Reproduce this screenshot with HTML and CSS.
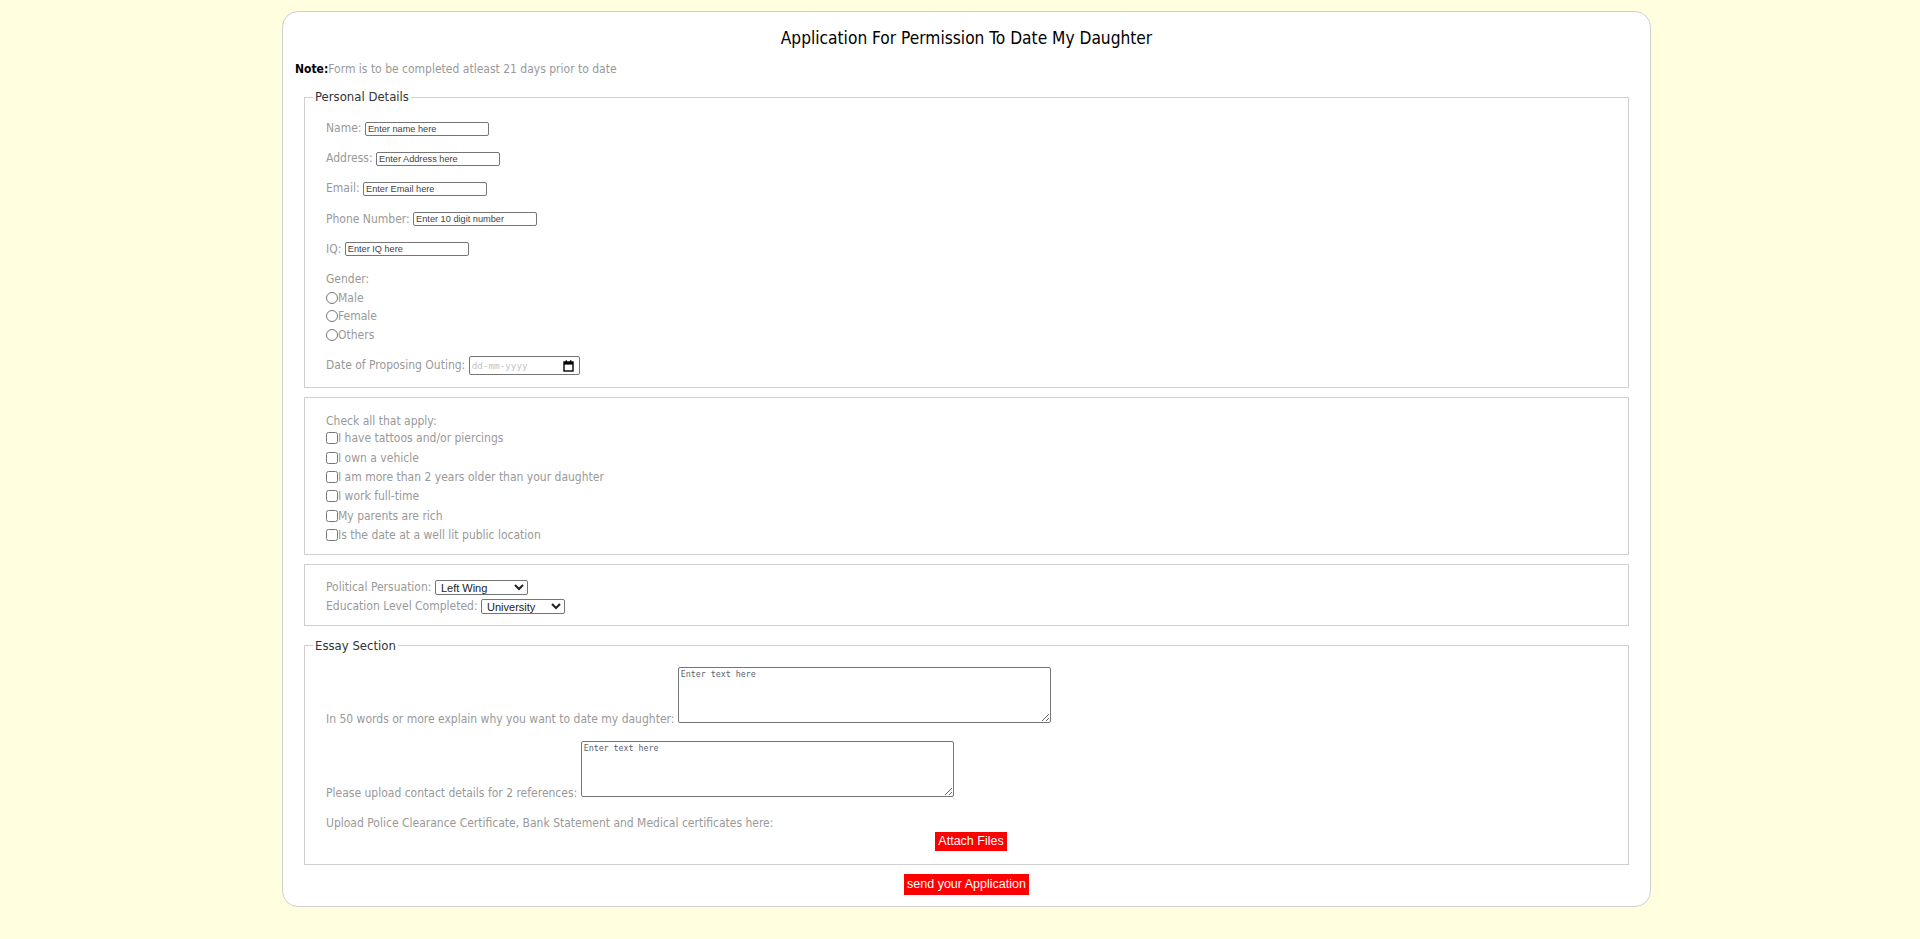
FILE: index.html
```html
<!DOCTYPE html>
<html lang="en">
<head>
<meta charset="utf-8">
<title>Application For Permission To Date My Daughter</title>
<link rel="stylesheet" href="styles.css">
</head>
<body>
<div class="card">
  <h1 class="title">Application For Permission To Date My Daughter</h1>
  <p class="note"><b>Note:</b>Form is to be completed atleast 21 days prior to date</p>
  <form class="form">
    <fieldset class="fs fs-personal">
      <legend>Personal Details</legend>
      <div class="row"><label>Name: <input type="text" class="txt" placeholder="Enter name here"></label></div>
      <div class="row"><label>Address: <input type="text" class="txt" placeholder="Enter Address here"></label></div>
      <div class="row"><label>Email: <input type="email" class="txt" placeholder="Enter Email here"></label></div>
      <div class="row"><label>Phone Number: <input type="tel" class="txt" placeholder="Enter 10 digit number"></label></div>
      <div class="row"><label>IQ: <input type="text" class="txt" placeholder="Enter IQ here"></label></div>
      <div class="gender">
        <div class="gender-label">Gender:</div>
        <label class="opt"><input type="radio" name="gender" class="radio">Male</label>
        <label class="opt"><input type="radio" name="gender" class="radio">Female</label>
        <label class="opt"><input type="radio" name="gender" class="radio">Others</label>
      </div>
      <div class="date-row">
        <label>Date of Proposing Outing: <span class="date-field"><input type="text" class="date-input" placeholder="dd-mm-yyyy"><svg class="cal" width="11" height="12" viewBox="0 0 11 12"><rect x="1" y="2" width="9" height="9" fill="none" stroke="#000" stroke-width="1.4"/><rect x="1" y="2" width="9" height="2.6" fill="#000"/><rect x="2.6" y="0.3" width="1.4" height="2" fill="#000"/><rect x="7" y="0.3" width="1.4" height="2" fill="#000"/></svg></span></label>
      </div>
    </fieldset>

    <fieldset class="fs fs-checks">
      <div class="check-label">Check all that apply:</div>
      <label class="chk"><input type="checkbox" class="box">I have tattoos and/or piercings</label>
      <label class="chk"><input type="checkbox" class="box">I own a vehicle</label>
      <label class="chk"><input type="checkbox" class="box">I am more than 2 years older than your daughter</label>
      <label class="chk"><input type="checkbox" class="box">I work full-time</label>
      <label class="chk"><input type="checkbox" class="box">My parents are rich</label>
      <label class="chk"><input type="checkbox" class="box">Is the date at a well lit public location</label>
    </fieldset>

    <fieldset class="fs fs-selects">
      <div class="sel-row"><label>Political Persuation: <select class="sel sel-pol"><option>Left Wing</option><option>Right Wing</option><option>Centre</option></select></label></div>
      <div class="sel-row"><label>Education Level Completed: <select class="sel sel-edu"><option>University</option><option>High School</option><option>None</option></select></label></div>
    </fieldset>

    <fieldset class="fs fs-essay">
      <legend>Essay Section</legend>
      <div class="essay-row"><label>In 50 words or more explain why you want to date my daughter: <textarea class="area" placeholder="Enter text here"></textarea></label></div>
      <div class="essay-row"><label>Please upload contact details for 2 references: <textarea class="area" placeholder="Enter text here"></textarea></label></div>
      <div class="upload-label">Upload Police Clearance Certificate, Bank Statement and Medical certificates here:</div>
      <div class="center attach-wrap"><button type="button" class="btn">Attach Files</button></div>
    </fieldset>

    <div class="center submit"><button type="submit" class="btn btn-send">send your Application</button></div>
  </form>
</div>
</body>
</html>
```

FILE: styles.css
```css
* { box-sizing: border-box; }

html, body {
  margin: 0;
  padding: 0;
}

body {
  background: #ffffe0;
  font-family: "DejaVu Sans Condensed", "DejaVu Sans", sans-serif;
  font-stretch: condensed;
  min-height: 939px;
}

.card {
  width: 1369px;
  margin: 11px 0 0 282px;
  background: #fff;
  border: 1px solid #cfcfcf;
  border-radius: 16px;
  padding: 16px 12px 11px;
}

.title {
  margin: 0;
  font-size: 17.2px;
  font-weight: normal;
  line-height: 20px;
  text-align: center;
  color: #000;
}

.note {
  margin: 13px 0 12px;
  font-size: 12px;
  line-height: 16px;
  color: #999;
}

.note b {
  color: #000;
  font-weight: bold;
}

.form { margin: 0; }

.fs {
  margin: 0 9px 9px;
  border: 1px solid #cfcfcf;
  padding: 0 21px;
  min-width: 0;
  font-size: 12px;
  color: #999;
}

legend {
  font-size: 13px;
  line-height: 16px;
  color: #333;
  padding: 0 2px;
  margin-left: -13px;
}

.fs-personal { padding-top: 15px; padding-bottom: 12px; }

.row {
  height: 16px;
  line-height: 16px;
  margin-bottom: 14.2px;
}

.txt {
  width: 124px;
  height: 14px;
  padding: 0 2px;
  margin: 0;
  border: 1px solid #767676;
  border-radius: 2px;
  font-family: "Liberation Sans", Arial, sans-serif;
  font-size: 9.2px;
  color: #222;
  vertical-align: middle;
}

.txt::placeholder { color: #444; }

.gender-label {
  line-height: 16px;
  margin-bottom: 2px;
}

.opt {
  display: block;
  line-height: 18.5px;
  height: 18.5px;
}

.radio, .box {
  width: 12px;
  height: 12px;
  margin: 0;
  vertical-align: -2px;
}

.date-row {
  margin-top: 12px;
  line-height: 19px;
  height: 19px;
}

.date-field {
  display: inline-flex;
  align-items: center;
  width: 111px;
  height: 19px;
  border: 1px solid #767676;
  border-radius: 2px;
  padding: 0 5px 0 2px;
  vertical-align: middle;
}

.date-input {
  flex: 1;
  min-width: 0;
  border: 0;
  padding: 0;
  margin: 0;
  outline: none;
  background: transparent;
  font-family: "DejaVu Sans Mono", monospace;
  font-size: 9.3px;
}

.date-input::placeholder { color: #c4c4c4; }

.cal { flex: none; display: block; }

.fs-checks { padding-top: 15px; padding-bottom: 9px; }

.check-label { line-height: 16px; }

.chk {
  display: block;
  height: 19.3px;
  line-height: 19.3px;
}

.fs-selects { padding-top: 13px; padding-bottom: 9.5px; margin-bottom: 12px; }

.sel-row {
  height: 18.5px;
  line-height: 18.5px;
}

.sel {
  height: 15px;
  padding: 0 0 0 1px;
  margin: 0;
  border: 1px solid #767676;
  border-radius: 2px;
  font-family: "Liberation Sans", Arial, sans-serif;
  font-size: 11px;
  line-height: 13px;
  color: #222;
  background: #fff;
  vertical-align: middle;
}

.sel-pol { width: 93px; }
.sel-edu { width: 84px; }

.fs-essay { padding-top: 13px; padding-bottom: 13px; }

.essay-row {
  line-height: 16px;
  margin-bottom: 14px;
}

.area {
  width: 373px;
  height: 56px;
  margin: 0;
  padding: 1px 2px;
  border: 1px solid #767676;
  border-radius: 2px;
  font-family: "DejaVu Sans Mono", monospace;
  font-size: 8.3px;
  resize: both;
}

.area::placeholder { color: #5a6070; }

.upload-label {
  line-height: 16px;
  margin-top: 2px;
}

.center { text-align: center; }

.attach-wrap { margin-top: 1px; line-height: 0; padding-left: 9px; }

.btn {
  background: #ff0000;
  color: #fff;
  border: 0;
  border-radius: 0;
  padding: 2px 3px;
  margin: 0;
  font-family: "Liberation Sans", Arial, sans-serif;
  font-size: 12.5px;
  line-height: 15px;
  cursor: pointer;
}

.btn-send { padding: 3px 3px; }

.submit { line-height: 0; }
```
